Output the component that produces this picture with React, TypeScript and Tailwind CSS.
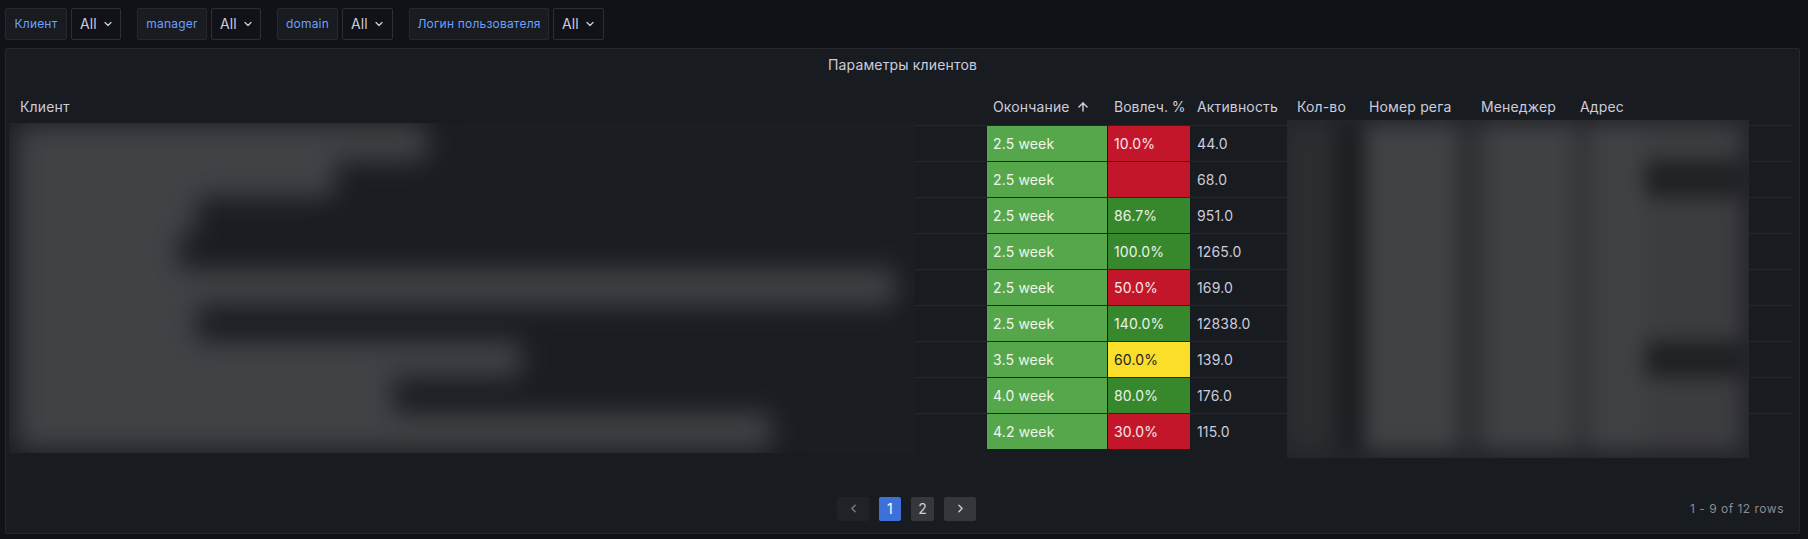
import { ArrowUp, ChevronDown, ChevronLeft, ChevronRight } from "lucide-react";

interface Row {
  ends: string;
  rate: string;
  rateClass: string;
  activity: string;
}

const RED = "bg-[#c4162a] text-white/90";
const GREEN = "bg-[#37872d] text-white/90";
const YELLOW = "bg-[#fade2a] text-[#1f2226]";

const rows: Row[] = [
  { ends: "2.5 week", rate: "10.0%", rateClass: RED, activity: "44.0" },
  { ends: "2.5 week", rate: "", rateClass: RED, activity: "68.0" },
  { ends: "2.5 week", rate: "86.7%", rateClass: GREEN, activity: "951.0" },
  { ends: "2.5 week", rate: "100.0%", rateClass: GREEN, activity: "1265.0" },
  { ends: "2.5 week", rate: "50.0%", rateClass: RED, activity: "169.0" },
  { ends: "2.5 week", rate: "140.0%", rateClass: GREEN, activity: "12838.0" },
  { ends: "3.5 week", rate: "60.0%", rateClass: YELLOW, activity: "139.0" },
  { ends: "4.0 week", rate: "80.0%", rateClass: GREEN, activity: "176.0" },
  { ends: "4.2 week", rate: "30.0%", rateClass: RED, activity: "115.0" },
];

const filters = [
  { label: "Клиент", labelWidth: "w-[62px]", selectWidth: "w-[50px]" },
  { label: "manager", labelWidth: "w-[70px]", selectWidth: "w-[50px]" },
  { label: "domain", labelWidth: "w-[61px]", selectWidth: "w-[51px]" },
  { label: "Логин пользователя", labelWidth: "w-[140px]", selectWidth: "w-[51px]" },
];

// redacted client names, widths are per row
const clientBars = [
  "w-[410px]",
  "w-[318px]",
  "w-[180px]",
  "w-[162px]",
  "w-[878px]",
  "w-[180px]",
  "w-[504px]",
  "w-[376px]",
  "w-[754px]",
];

// rows with a short address in the right block
const shortAddress = [1, 6];

const tableCols = "grid grid-cols-[978px_121px_83px_100px_72px_112px_99px_217px]";

const Filter = ({ label, labelWidth, selectWidth }: (typeof filters)[number]) => (
  <div className="flex gap-1">
    <div className={`${labelWidth} h-8 whitespace-nowrap flex items-center justify-center bg-[#181b1f] border border-[#26282d] rounded-[2px] text-xs tracking-[0.01667em] text-[#6e9fff]`}>
      {label}
    </div>
    <div className={`${selectWidth} h-8 pl-2 flex items-center gap-[5px] bg-[#111217] border border-[#2c2e33] rounded-[2px] text-sm text-[#ccccdc]`}>
      All
      <ChevronDown size={12} strokeWidth={2.5} />
    </div>
  </div>
);

const App = () => {
  return (
    <div className="w-[1808px] h-[539px] overflow-hidden bg-[#111217] pl-[5px] pt-2 font-[Inter,sans-serif] text-sm tracking-[0.01071em] text-[#ccccdc]">
      <div className="flex gap-4">
        {filters.map((f) => (
          <Filter key={f.label} {...f} />
        ))}
      </div>

      <div className="mt-2 w-[1795px] h-[486px] flex flex-col bg-[#181b1f] border border-[#25272c] rounded-[2px]">
        <div className="h-8 shrink-0 flex items-center justify-center text-sm">
          Параметры клиентов
        </div>

        <div className="relative mt-2 pl-[3px] pr-[8px]">
          <div className={`${tableCols} h-9 items-center`}>
            <div className="pl-[11px]">Клиент</div>
            <div className="pl-[6px] flex items-center gap-[6px]">
              Окончание
              <ArrowUp size={14} strokeWidth={2.5} />
            </div>
            <div className="pl-[6px] tracking-normal">Вовлеч. %</div>
            <div className="pl-[6px]">Активность</div>
            <div className="pl-[6px]">Кол-во</div>
            <div className="pl-[6px]">Номер рега</div>
            <div className="pl-[6px]">Менеджер</div>
            <div className="pl-[6px]">Адрес</div>
          </div>

          {rows.map((row, i) => (
            <div key={i} className={`${tableCols} h-9 border-t border-[#25272c]`}>
              <div />
              <div className="mr-px pl-[6px] flex items-center bg-[#56a64b] text-white/90">{row.ends}</div>
              <div className={`mr-px pl-[6px] flex items-center ${row.rateClass}`}>{row.rate}</div>
              <div className="pl-[6px] flex items-center">{row.activity}</div>
            </div>
          ))}

          {/* redacted columns painted over the table */}
          <div className="absolute left-[3px] top-[34px] w-[906px] h-[330px] overflow-hidden bg-[#1a1d21]">
            <div className="pt-[2px] flex flex-col blur-[13px]">
              {clientBars.map((w, i) => (
                <div key={i} className={`${w} h-9 ml-2 bg-[#414246]`} />
              ))}
            </div>
          </div>

          <div className="absolute left-[1281px] top-[31px] w-[462px] h-[338px] overflow-hidden bg-[#232529]">
            <div className="pt-[5px] flex flex-col blur-[10px]">
              {rows.map((_, i) => (
                <div key={i} className="h-9 flex">
                  <div className="w-12 bg-[#2c2d31]" />
                  <div className="w-[30px] bg-[#1b1d21]" />
                  <div className="w-[90px] bg-[#414246]" />
                  <div className="w-[30px] bg-[#303135]" />
                  <div className="w-[88px] bg-[#404145]" />
                  <div className="w-[18px] bg-[#323337]" />
                  <div className="w-[54px] bg-[#404145]" />
                  <div className={`w-[96px] ${shortAddress.includes(i) ? "bg-[#1f2024]" : "bg-[#3c3d41]"}`} />
                </div>
              ))}
            </div>
          </div>
        </div>

        <div className="flex-1 flex items-center pl-[831px] pr-[15px] pt-[35px]">
          <div className="flex items-center">
            <div className="w-8 h-6 flex items-center justify-center bg-[#202226] rounded-[2px] text-[#7b7d84]">
              <ChevronLeft size={13} strokeWidth={2.5} />
            </div>
            <div className="ml-[10px] w-[22px] h-6 flex items-center justify-center bg-[#3d71d9] rounded-[2px] text-white">
              1
            </div>
            <div className="ml-[10px] w-[23px] h-6 flex items-center justify-center bg-[#35373c] rounded-[2px]">
              2
            </div>
            <div className="ml-[10px] w-8 h-6 flex items-center justify-center bg-[#35373c] rounded-[2px]">
              <ChevronRight size={13} strokeWidth={2.5} />
            </div>
          </div>
          <div className="ml-auto text-xs tracking-[0.5px] text-[#8b8c93]">1 - 9 of 12 rows</div>
        </div>
      </div>
    </div>
  );
};

export default App;
